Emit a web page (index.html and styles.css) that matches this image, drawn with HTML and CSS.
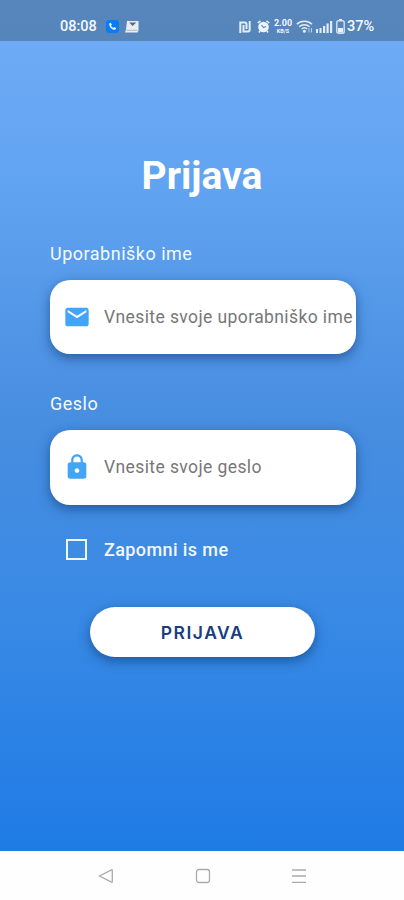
FILE: index.html
```html
<!DOCTYPE html>
<html lang="sl">
<head>
<meta charset="utf-8">
<title>Prijava</title>
<link rel="stylesheet" href="styles.css">
</head>
<body>
<div class="phone">
  <header class="status">
    <span class="time">08:08</span>
    <svg class="call" width="13" height="13" viewBox="0 0 13 13"><rect width="13" height="13" rx="3" fill="#087cf5"/><path d="M3.300 3.200l1.500-.4 1 2-.8.9c.5 1 1.200 1.700 2.200 2.200l.9-.8 2 1-.4 1.500C6.400 10.500 2.500 6.600 3.300 3.200z" fill="#e8f4ff"/></svg>
    <svg class="inbox" width="14" height="12" viewBox="0 0 14 12"><path d="M2 0h11.500v9.500l-1 2H0l1-3z" fill="#e9edf2"/><path d="M4.200 1.500l3.400 3.500L11.300 1.500z" fill="#56677d"/><path d="M1.500 9.300h11" fill="none" stroke="#9ba9ba" stroke-width=".8"/></svg>
    <span class="spacer"></span>
    <svg class="nfc" width="12" height="12" viewBox="0 0 12 12"><path d="M1.300 12V1.500h4.500Q7.500 1.500 7.500 3.500V8M4.500 4v6.500H9q1.700 0 1.700-2V0" fill="none" stroke="#e3edf8" stroke-width="2"/></svg>
    <svg class="alarm" width="13" height="13" viewBox="0 0 13 13"><circle cx="6.500" cy="7" r="5.300" fill="#eef4fb"/><path d="M.8 3L3.500 .8M9.500 .8L12.200 3M3 11l-1 1.500M10 11l1 1.500" stroke="#eef4fb" stroke-width="1.600"/><path d="M4.500 5l2 2.500 2.500-1" fill="none" stroke="#5788c0" stroke-width="1.200"/></svg>
    <span class="speed"><b>2.00</b><i>KB/S</i></span>
    <svg class="wifi" width="17" height="13" viewBox="0 0 17 13"><g fill="none" stroke="#e2edf8" stroke-width="1.500"><path d="M.8 4.300c4.200-4 11-4 15.200 0M3.200 6.800c3-2.800 7.400-2.800 10.400 0M5.700 9c1.700-1.600 3.800-1.600 5.500 0"/></g><circle cx="8.400" cy="11.200" r="1.500" fill="#e2edf8"/><path d="M13 8v4.500M15.500 8v4.500" stroke="#bcd3eb"/></svg>
    <svg class="signal" width="17" height="12" viewBox="0 0 17 12"><g fill="#e2edf8"><rect y="8" width="2" height="4"/><rect x="3.500" y="7" width="2" height="5"/><rect x="7" y="5" width="2.200" height="7"/><rect x="10.500" y="2.500" width="2.200" height="9.500"/><rect x="14" width="2.200" height="12"/></g></svg>
    <svg class="battery" width="9" height="15" viewBox="0 0 9 15"><path d="M3 0h3v2H3z" fill="#e2edf8"/><rect x=".8" y="1.800" width="7.400" height="12.400" rx="1.800" fill="none" stroke="#d5e3f2" stroke-width="1.400"/><rect x="2" y="9" width="5" height="4.500" fill="#e9f1fa"/></svg>
    <span class="percent">37%</span>
  </header>
  <main>
    <h1>Prijava</h1>
    <form>
      <div class="label user-label">Uporabniško ime</div>
      <div class="field">
        <svg width="28" height="28" viewBox="0 0 24 24" fill="#42a5f5"><path d="M20 4H4c-1.100 0-1.990.9-1.990 2L2 18c0 1.100.9 2 2 2h16c1.100 0 2-.9 2-2V6c0-1.100-.9-2-2-2zm0 4l-8 5-8-5V6l8 5 8-5v2z"/></svg>
        <span class="hint">Vnesite svoje uporabniško ime</span>
      </div>
      <div class="label pass-label">Geslo</div>
      <div class="field">
        <svg width="28" height="28" viewBox="0 0 24 24" fill="#42a5f5"><path d="M18 8h-1V6c0-2.760-2.240-5-5-5S7 3.240 7 6v2H6c-1.100 0-2 .9-2 2v10c0 1.100.9 2 2 2h12c1.100 0 2-.9 2-2V10c0-1.100-.9-2-2-2zm-6 9c-1.100 0-2-.9-2-2s.9-2 2-2 2 .9 2 2-.9 2-2 2zm3.100-9H8.900V6c0-1.710 1.390-3.100 3.100-3.100s3.100 1.390 3.100 3.100v2z"/></svg>
        <span class="hint">Vnesite svoje geslo</span>
      </div>
      <div class="remember"><span class="box"></span><span class="remember-text">Zapomni is me</span></div>
      <button type="button">PRIJAVA</button>
    </form>
  </main>
  <nav>
    <svg width="16" height="16" viewBox="0 0 16 16"><path d="M1.500 8L13.500 1.800q.8-.3.800.6v11.200q0 .9-.8.600z"/></svg>
    <svg width="16" height="16" viewBox="0 0 16 16"><rect x="1.500" y="1.500" width="13" height="13" rx="2.500"/></svg>
    <svg width="16" height="16" viewBox="0 0 16 16"><path d="M1 2h14M1 8h14M1 14.300h14"/></svg>
  </nav>
</div>
</body>
</html>
```
FILE: styles.css
```css
* { box-sizing: border-box; }
body { margin: 0; font-family: Roboto, sans-serif; }
svg { flex: none; }
.phone {
  width: 404px;
  height: 900px;
  display: flex;
  flex-direction: column;
  overflow: hidden;
  background: linear-gradient(#73aef5 0, #6eaaf5 45px, #61a4f1 180px, #478de0 425px, #398ae5 610px, #1f7be5 850px);
}
.status {
  height: 41px;
  padding: 12px 29px 0 60px;
  display: flex;
  align-items: center;
  background: linear-gradient(#5786bd, #5585b9);
  color: #f4f8fd;
}
.time { width: 38px; font-size: 14.500px; font-weight: 500; white-space: nowrap; }
.call { margin-left: 8px; }
.inbox { margin-left: 6px; }
.spacer { flex: 1; }
.alarm { margin-left: 6px; }
.speed {
  width: 20px;
  margin-left: 3px;
  display: flex;
  flex-direction: column;
  align-items: center;
  font-size: 9px;
}
.speed b { line-height: 8px; height: 8px; }
.speed i { font-size: 5.500px; font-style: normal; font-weight: 700; line-height: 7px; margin-top: 1px; }
.wifi { margin-left: 3px; }
.signal { margin-left: 3px; }
.battery { margin-left: 3px; }
.percent { width: 28px; margin-left: 2px; font-size: 14.500px; font-weight: 500; white-space: nowrap; }
main { flex: 1; padding: 111px 50px 0 50px; }
h1 {
  margin: 0;
  color: #fff;
  font-size: 39px;
  line-height: 48px;
  font-weight: 700;
  text-align: center;
}
.label {
  height: 24px;
  color: #f5f9fe;
  font-size: 18px;
  line-height: 24px;
  letter-spacing: .5px;
}
.user-label { margin-top: 41.500px; }
.pass-label { margin-top: 38px; }
.field {
  height: 74px;
  width: 306px;
  margin-top: 14px;
  padding-left: 13px;
  display: flex;
  align-items: center;
  overflow: hidden;
  border-radius: 20px;
  background: #fff;
  box-shadow: 0 4px 12px rgba(15, 55, 110, .6);
}
.pass-label + .field { height: 75px; }
.hint { margin-left: 13px; color: #777; font-size: 17.500px; letter-spacing: .4px; white-space: nowrap; }
.remember { height: 24px; margin-top: 32.500px; padding-left: 16px; display: flex; align-items: center; color: #f2f7fe; font-size: 18px; font-weight: 500; }
.box { width: 21px; height: 21px; border: 2px solid #eff6fe; }
.remember-text { margin-left: 17px; letter-spacing: .4px; }
button {
  display: block;
  width: 225px;
  height: 50px;
  margin: 46px auto 0 40px;
  padding: 0;
  border: 0;
  border-radius: 25px;
  background: #fff;
  color: #183d80;
  font: 600 17.500px Inter, sans-serif;
  letter-spacing: 1.500px;
  box-shadow: 0 4px 12px rgba(15, 55, 110, .6);
}
nav {
  height: 49px;
  padding: 0 97px 0 98px;
  display: flex;
  align-items: center;
  justify-content: space-between;
  background: #fefefe;
}
nav svg { fill: none; stroke: #aaa; stroke-width: 1.300; }
```
